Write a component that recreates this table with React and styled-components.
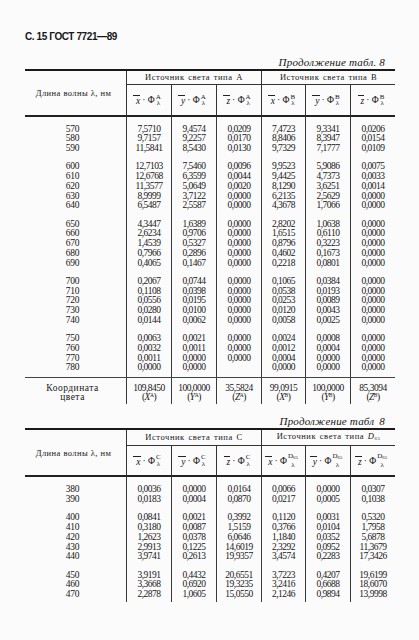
import React from 'react';
import styled, { createGlobalStyle } from 'styled-components';

const GlobalStyle = createGlobalStyle`
  html, body {
    margin: 0;
    padding: 0;
    background: #fbfbfb;
  }
  body {
    font-family: "Liberation Serif", "Times New Roman", serif;
    color: #161616;
  }
`;

const Page = styled.div`
  width: 419px;
  box-sizing: border-box;
  padding: 31px 24px 0 25px;
`;

const RunningHead = styled.div`
  font-family: "Liberation Sans", Arial, sans-serif;
  font-weight: 700;
  font-size: 10px;
  letter-spacing: -0.4px;
  line-height: 12px;
  margin-bottom: 13px;
`;

const Caption = styled.div`
  text-align: right;
  font-style: italic;
  font-size: 11px;
  line-height: 12px;
  letter-spacing: 0.2px;
  padding-right: 10px;
  margin: ${({ $top }) => $top || 0}px 0 1px;
`;

const Gap = styled.span`
  display: inline-block;
  width: 5px;
`;

const Sheet = styled.table`
  width: 370px;
  table-layout: fixed;
  border-collapse: separate;
  border-spacing: 0;
  border-top: 2px solid #1a1a1a;
`;

const LabelHead = styled.th`
  font-weight: 400;
  font-size: 8.5px;
  letter-spacing: 0.45px;
  padding: 0 4px 0 0;
  text-align: center;
  vertical-align: middle;
  border-bottom: 2px solid #222;
`;

const GroupHead = styled.th`
  font-weight: 400;
  font-size: 8.5px;
  letter-spacing: 0.55px;
  word-spacing: 1px;
  line-height: 13px;
  padding: 0;
  text-align: center;
  border-left: 1px solid #333;
  border-bottom: 1px solid #333;
`;

const FormulaHead = styled.th`
  font-weight: 400;
  padding: 0;
  border-left: 1px solid #333;
  border-bottom: 2px solid #222;
`;

const FormulaBox = styled.div`
  height: ${({ $h }) => $h}px;
  display: flex;
  align-items: center;
  justify-content: center;
  font-size: 9.5px;
  padding-right: 4px;
`;

const Over = styled.span`
  display: inline-block;
  border-top: 1px solid #222;
  padding: 2px 0 0 3px;
  line-height: 7px;
  font-style: italic;
  margin-right: 2px;
`;

const Idx = styled.span`
  display: inline-flex;
  flex-direction: column;
  align-items: center;
  font-size: 7px;
  line-height: 6.5px;
  margin-left: 1px;
`;

const Tiny = styled.span`
  font-size: 4.8px;
  vertical-align: -1px;
`;

const Cell = styled.td`
  padding: ${({ $pt }) => $pt}px ${({ $label }) => ($label ? 6 : 0)}px ${({ $pb }) => $pb}px 0;
  text-align: center;
  vertical-align: top;
  font-size: 9.5px;
  line-height: 9.7px;
  letter-spacing: ${({ $label }) => ($label ? '-0.3px' : '-0.5px')};
  border-left: ${({ $label }) => ($label ? 'none' : '1px solid #3a3a3a')};
  border-bottom: ${({ $rule }) => ($rule ? '1px solid #444' : 'none')};
`;

const Words = styled.div`
  letter-spacing: 0.5px;
  line-height: 9.3px;
`;

const CoordLine = styled.div`
  line-height: 9.3px;
`;

const It = styled.i`
  font-style: italic;
`;

const Sup = styled.sup`
  font-size: 5.5px;
  vertical-align: 3px;
  line-height: 0;
`;

const A1 = {
  title: 'Продолжение табл. 8',
  headHeight: 30,
  firstPad: 7.5,
  sources: ['Источник света типа А', 'Источник света типа В'],
  marks: ['A', 'A', 'A', 'B', 'B', 'B'],
  groups: [
    [
      ['570', '7,5710', '9,4574', '0,0209', '7,4723', '9,3341', '0,0206'],
      ['580', '9,7157', '9,2257', '0,0170', '8,8406', '8,3947', '0,0154'],
      ['590', '11,5841', '8,5430', '0,0130', '9,7329', '7,1777', '0,0109'],
    ],
    [
      ['600', '12,7103', '7,5460', '0,0096', '9,9523', '5,9086', '0,0075'],
      ['610', '12,6768', '6,3599', '0,0044', '9,4425', '4,7373', '0,0033'],
      ['620', '11,3577', '5,0649', '0,0020', '8,1290', '3,6251', '0,0014'],
      ['630', '8,9999', '3,7122', '0,0000', '6,2135', '2,5629', '0,0000'],
      ['640', '6,5487', '2,5587', '0,0000', '4,3678', '1,7066', '0,0000'],
    ],
    [
      ['650', '4,3447', '1,6389', '0,0000', '2,8202', '1,0638', '0,0000'],
      ['660', '2,6234', '0,9706', '0,0000', '1,6515', '0,6110', '0,0000'],
      ['670', '1,4539', '0,5327', '0,0000', '0,8796', '0,3223', '0,0000'],
      ['680', '0,7966', '0,2896', '0,0000', '0,4602', '0,1673', '0,0000'],
      ['690', '0,4065', '0,1467', '0,0000', '0,2218', '0,0801', '0,0000'],
    ],
    [
      ['700', '0,2067', '0,0744', '0,0000', '0,1065', '0,0384', '0,0000'],
      ['710', '0,1108', '0,0398', '0,0000', '0,0538', '0,0193', '0,0000'],
      ['720', '0,0556', '0,0195', '0,0000', '0,0253', '0,0089', '0,0000'],
      ['730', '0,0280', '0,0100', '0,0000', '0,0120', '0,0043', '0,0000'],
      ['740', '0,0144', '0,0062', '0,0000', '0,0058', '0,0025', '0,0000'],
    ],
    [
      ['750', '0,0063', '0,0021', '0,0000', '0,0024', '0,0008', '0,0000'],
      ['760', '0,0032', '0,0011', '0,0000', '0,0012', '0,0004', '0,0000'],
      ['770', '0,0011', '0,0000', '0,0000', '0,0004', '0,0000', '0,0000'],
      ['780', '0,0000', '0,0000', '', '0,0000', '0,0000', '0,0000'],
    ],
  ],
  totals: [
    ['109,8450', 'X', 'A'],
    ['100,0000', 'Y', 'A'],
    ['35,5824', 'Z', 'A'],
    ['99,0915', 'X', 'B'],
    ['100,0000', 'Y', 'B'],
    ['85,3094', 'Z', 'B'],
  ],
};

const A2 = {
  title: (
    <>
      Продолжение табл<Gap />8
    </>
  ),
  headHeight: 29,
  firstPad: 8,
  sources: [
    'Источник света типа С',
    <>
      Источник света типа <It>D</It>
      <Tiny>65</Tiny>
    </>,
  ],
  marks: ['C', 'C', 'C', 'D65', 'D65', 'D65'],
  groups: [
    [
      ['380', '0,0036', '0,0000', '0,0164', '0,0066', '0,0000', '0,0307'],
      ['390', '0,0183', '0,0004', '0,0870', '0,0217', '0,0005', '0,1038'],
    ],
    [
      ['400', '0,0841', '0,0021', '0,3992', '0,1120', '0,0031', '0,5320'],
      ['410', '0,3180', '0,0087', '1,5159', '0,3766', '0,0104', '1,7958'],
      ['420', '1,2623', '0,0378', '6,0646', '1,1840', '0,0352', '5,6878'],
      ['430', '2,9913', '0,1225', '14,6019', '2,3292', '0,0952', '11,3679'],
      ['440', '3,9741', '0,2613', '19,9357', '3,4574', '0,2283', '17,3426'],
    ],
    [
      ['450', '3,9191', '0,4432', '20,6551', '3,7223', '0,4207', '19,6199'],
      ['460', '3,3668', '0,6920', '19,3235', '3,2416', '0,6688', '18,6070'],
      ['470', '2,2878', '1,0605', '15,0550', '2,1246', '0,9894', '13,9998'],
    ],
  ],
};

const VARS = ['x', 'y', 'z', 'x', 'y', 'z'];

function Mark({ m }) {
  if (m === 'D65') {
    return (
      <span>
        D<Tiny>65</Tiny>
      </span>
    );
  }
  return <span>{m}</span>;
}

function Formula({ v, m, h }) {
  return (
    <FormulaBox $h={h}>
      <Over>{v}</Over>·&nbsp;Φ
      <Idx>
        <Mark m={m} />
        <span>λ</span>
      </Idx>
    </FormulaBox>
  );
}

function SpectralTable({ data }) {
  const last = data.groups.length - 1;
  return (
    <Sheet>
      <colgroup>
        <col style={{ width: 101 }} />
        <col style={{ width: 45 }} />
        <col style={{ width: 45 }} />
        <col style={{ width: 45 }} />
        <col style={{ width: 44 }} />
        <col style={{ width: 45 }} />
        <col style={{ width: 45 }} />
      </colgroup>
      <thead>
        <tr>
          <LabelHead rowSpan={2}>Длина волны λ, нм</LabelHead>
          <GroupHead colSpan={3}>{data.sources[0]}</GroupHead>
          <GroupHead colSpan={3}>{data.sources[1]}</GroupHead>
        </tr>
        <tr>
          {VARS.map((v, i) => (
            <FormulaHead key={i}>
              <Formula v={v} m={data.marks[i]} h={data.headHeight} />
            </FormulaHead>
          ))}
        </tr>
      </thead>
      <tbody>
        {data.groups.map((rows, g) => {
          const closing = g === last;
          const rule = closing && !!data.totals;
          return (
            <tr key={g}>
              {rows[0].map((_, c) => (
                <Cell
                  key={c}
                  $label={c === 0}
                  $pt={g === 0 ? data.firstPad : 0}
                  $pb={closing ? (rule ? 3.5 : 2) : 8.8}
                  $rule={rule}
                >
                  {rows.map((r, k) => (r[c] ? <div key={k}>{r[c]}</div> : null))}
                </Cell>
              ))}
            </tr>
          );
        })}
        {data.totals && (
          <tr>
            <Cell $label $pt={6} $pb={2}>
              <Words>Координата</Words>
              <Words>цвета</Words>
            </Cell>
            {data.totals.map(([val, letter, mark], i) => (
              <Cell key={i} $pt={6} $pb={2}>
                <CoordLine>{val}</CoordLine>
                <CoordLine>
                  (<It>{letter}</It>
                  <Sup>{mark}</Sup>)
                </CoordLine>
              </Cell>
            ))}
          </tr>
        )}
      </tbody>
    </Sheet>
  );
}

export default function App() {
  return (
    <Page>
      <GlobalStyle />
      <RunningHead>С. 15 ГОСТ 7721—89</RunningHead>
      <Caption>{A1.title}</Caption>
      <SpectralTable data={A1} />
      <Caption $top={11}>{A2.title}</Caption>
      <SpectralTable data={A2} />
    </Page>
  );
}
